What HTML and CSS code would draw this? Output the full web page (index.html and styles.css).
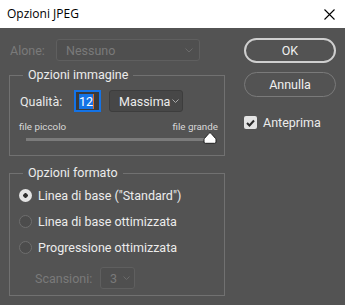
FILE: index.html
```html
<!DOCTYPE html>
<html>
<head>
<meta charset="utf-8">
<link rel="stylesheet" href="styles.css">
</head>
<body>
<div class="win">
  <div class="titlebar">
    <span class="title">Opzioni JPEG</span>
    <svg class="close" width="11" height="11" viewBox="0 0 11 11"><path d="M0.5 0.5 L10.5 10.5 M10.5 0.5 L0.5 10.5" stroke="#000" stroke-width="1.1" fill="none"/></svg>
  </div>
  <div class="body">
    <div class="left">
      <div class="row alone">
        <span class="lbl dis">Alone:</span>
        <div class="select dis-select wide"><span>Nessuno</span><svg class="chev" width="8" height="5" viewBox="0 0 8 5"><path d="M0.5 0.5 L4 4 L7.5 0.5" stroke="#6a6a6a" fill="none"/></svg></div>
      </div>
      <div class="group g1">
        <span class="caption">Opzioni immagine</span>
        <div class="row q">
          <span class="lbl ql">Qualità:</span>
          <div class="num"><span class="sel">12</span><span class="caret"></span></div>
          <div class="select dark"><span>Massima</span><svg class="chev" width="7" height="4" viewBox="0 0 7 4"><path d="M0.5 0.5 L3.5 3.5 L6.5 0.5" stroke="#aaa" fill="none"/></svg></div>
        </div>
        <div class="sizes"><span>file piccolo</span><span>file grande</span></div>
        <div class="track">
          <svg class="thumb" width="14" height="12" viewBox="0 0 14 12"><path d="M7 0.8 Q7.6 0.8 8.2 1.5 L12.6 6.5 Q13 7 13 7.8 L13 10 Q13 11.3 11.7 11.3 L2.3 11.3 Q1 11.3 1 10 L1 7.8 Q1 7 1.4 6.5 L5.8 1.5 Q6.4 0.8 7 0.8 Z" fill="#fff" stroke="#1e1e1e" stroke-width="1"/></svg>
        </div>
      </div>
      <div class="group g2">
        <span class="caption">Opzioni formato</span>
        <div class="radio on"><span class="dot"></span><span>Linea di base ("Standard")</span></div>
        <div class="radio"><span class="dot"></span><span>Linea di base ottimizzata</span></div>
        <div class="radio"><span class="dot"></span><span>Progressione ottimizzata</span></div>
        <div class="row scan">
          <span class="lbl dis">Scansioni:</span>
          <div class="select dis-select small"><span>3</span><svg class="chev" width="7" height="4" viewBox="0 0 7 4"><path d="M0.5 0.5 L3.5 3.5 L6.5 0.5" stroke="#6a6a6a" fill="none"/></svg></div>
        </div>
      </div>
    </div>
    <div class="right">
      <div class="btn ok">OK</div>
      <div class="btn cancel">Annulla</div>
      <div class="check"><span class="box"><svg width="9" height="8" viewBox="0 0 9 8"><path d="M1 4 L3.5 6.5 L8 1.5" stroke="#2a2a2a" stroke-width="2" fill="none"/></svg></span><span>Anteprima</span></div>
    </div>
  </div>
</div>
</body>
</html>
```
FILE: styles.css
```css
html, body {
  margin: 0;
  padding: 0;
}
body {
  width: 345px;
  height: 305px;
  overflow: hidden;
  font-family: "Roboto", "Noto Sans", sans-serif;
  font-size: 12.5px;
}
.win {
  width: 345px;
  height: 305px;
  display: flex;
  flex-direction: column;
}
.titlebar {
  height: 28px;
  background: #fff;
  display: flex;
  align-items: center;
  justify-content: space-between;
  padding: 0 10px 0 7px;
  box-sizing: border-box;
  flex: none;
}
.title {
  color: #000;
  font-family: "Open Sans", sans-serif;
  font-size: 12px;
  margin-top: -1px;
}
.close {
  display: block;
}
.body {
  flex: 1;
  background: #535353;
  display: flex;
  padding: 11px 0 0 9px;
  box-sizing: border-box;
  color: #e8e8e8;
}
.left {
  width: 216px;
  display: flex;
  flex-direction: column;
}
.row {
  display: flex;
  align-items: center;
  height: 22px;
}
.lbl.dis { color: #7a7a7a; }
.alone .lbl {
  width: 46px;
  padding-left: 1px;
}
.select {
  box-sizing: border-box;
  height: 22px;
  border-radius: 3px;
  display: flex;
  align-items: center;
  justify-content: space-between;
  padding: 0 6px 0 9px;
}
.select .chev { display: block; }
.dis-select {
  border: 1px solid #5f5f5f;
  background: #4f4f4f;
  color: #7a7a7a;
}
.wide { width: 144px; }
.small {
  width: 35px;
  padding: 0 4px 0 9px;
}
.dark {
  border: 1px solid #3d3d3d;
  background: #474747;
  color: #ececec;
  width: 74px;
  margin-left: 8px;
  padding: 0 3px 0 9px;
}
.group {
  position: relative;
  border: 1px solid #717171;
  box-sizing: border-box;
}
.caption {
  position: absolute;
  top: -10px;
  left: 13px;
  padding: 0 5px;
  background: #535353;
  line-height: 18px;
  color: #ececec;
}
.g1 {
  margin-top: 14px;
  height: 81px;
  padding: 14px 0 0 10px;
}
.ql {
  width: 54px;
}
.num {
  box-sizing: border-box;
  width: 27px;
  height: 22px;
  border: 2px solid #1473e6;
  background: #3a3a3a;
  display: flex;
  align-items: center;
  padding-left: 3px;
}
.num .sel {
  background: #1473e6;
  color: #fff;
  line-height: 15px;
}
.num .caret {
  width: 1px;
  height: 15px;
  background: #e07020;
}
.sizes {
  display: flex;
  justify-content: space-between;
  width: 199px;
  margin-left: -1px;
  margin-top: 9px;
  font-size: 9.8px;
  line-height: 12px;
  color: #d8d8d8;
}
.track {
  position: relative;
  margin: 5px 0 0 6px;
  width: 184px;
  height: 3px;
  background: #7b7b7b;
}
.thumb {
  position: absolute;
  right: -7px;
  top: -6px;
}
.g2 {
  margin-top: 17px;
  height: 123px;
  padding: 8px 0 0 9px;
}
.radio {
  display: flex;
  align-items: center;
  height: 26px;
  color: #ececec;
}
.radio .dot {
  box-sizing: border-box;
  width: 13px;
  height: 13px;
  border-radius: 50%;
  border: 1px solid #6e6e6e;
  background: #4c4c4c;
  margin-right: 6px;
}
.radio.on .dot {
  border-width: 0;
  background: radial-gradient(circle, #2e2e2e 0 2px, #e4e4e4 2.5px);
}
.scan {
  margin-top: 7px;
  padding-left: 16px;
}
.scan .lbl { width: 65px; }
.right {
  margin-left: 19px;
  width: 92px;
  display: flex;
  flex-direction: column;
}
.btn {
  box-sizing: border-box;
  height: 25px;
  border-radius: 13px;
  display: flex;
  align-items: center;
  justify-content: center;
  color: #f0f0f0;
}
.ok {
  margin-top: -1px;
  border: 2px solid #cfcfcf;
}
.cancel {
  margin-top: 9px;
  border: 1px solid #7a7a7a;
}
.check {
  display: flex;
  align-items: center;
  margin-top: 18px;
  color: #ececec;
}
.check .box {
  box-sizing: border-box;
  width: 13px;
  height: 13px;
  border-radius: 2px;
  background: #e4e4e4;
  display: flex;
  align-items: center;
  justify-content: center;
  margin-right: 6px;
}
.check .box svg { display: block; }
```
